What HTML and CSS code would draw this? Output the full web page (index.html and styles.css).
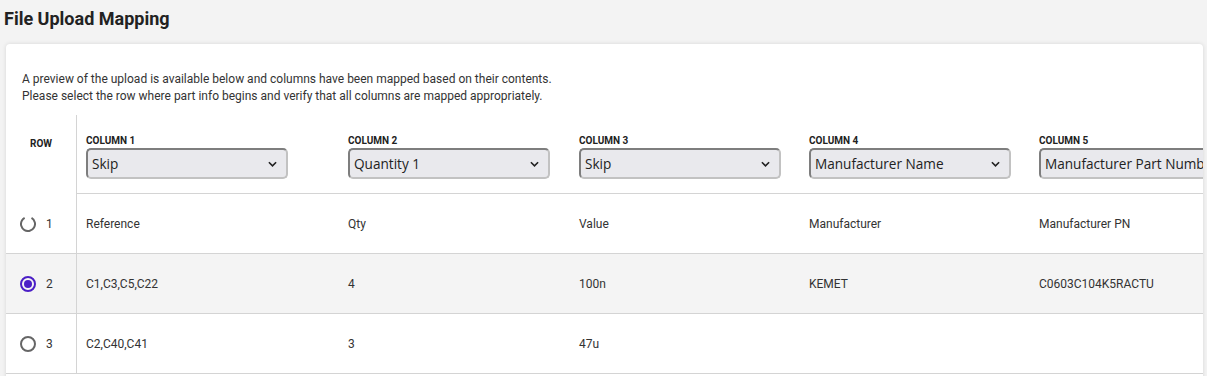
FILE: index.html
```html
<!DOCTYPE html>
<html lang="en">

<head>
  <meta charset="UTF-8">
  <meta name="viewport" content="width=device-width, initial-scale=1.0">
  <title>File Upload Mapping</title>
  <link rel="stylesheet" href="styles.css">
</head>

<body>
  <div class="page">
    <h1 class="page-title">File Upload Mapping</h1>

    <div class="card">
      <p class="intro">
        A preview of the upload is available below and columns have been mapped based on their contents.<br>
        Please select the row where part info begins and verify that all columns are mapped appropriately.
      </p>

      <table class="mapping">
        <colgroup>
          <col class="col-row">
          <col class="col-1">
          <col class="col-2">
          <col class="col-3">
          <col class="col-4">
          <col class="col-5">
        </colgroup>
        <thead>
          <tr>
            <th class="row-head">Row</th>
            <th>
              <label class="col-label">Column 1</label>
              <div class="select-wrap">
                <select>
                  <option>Skip</option>
                </select>
                <svg class="chevron" viewBox="0 0 10 6"><path d="M1 1l4 4 4-4"/></svg>
              </div>
            </th>
            <th>
              <label class="col-label">Column 2</label>
              <div class="select-wrap">
                <select>
                  <option>Quantity 1</option>
                </select>
                <svg class="chevron" viewBox="0 0 10 6"><path d="M1 1l4 4 4-4"/></svg>
              </div>
            </th>
            <th>
              <label class="col-label">Column 3</label>
              <div class="select-wrap">
                <select>
                  <option>Skip</option>
                </select>
                <svg class="chevron" viewBox="0 0 10 6"><path d="M1 1l4 4 4-4"/></svg>
              </div>
            </th>
            <th>
              <label class="col-label">Column 4</label>
              <div class="select-wrap">
                <select>
                  <option>Manufacturer Name</option>
                </select>
                <svg class="chevron" viewBox="0 0 10 6"><path d="M1 1l4 4 4-4"/></svg>
              </div>
            </th>
            <th>
              <label class="col-label">Column 5</label>
              <div class="select-wrap">
                <select>
                  <option>Manufacturer Part Number</option>
                </select>
                <svg class="chevron" viewBox="0 0 10 6"><path d="M1 1l4 4 4-4"/></svg>
              </div>
            </th>
          </tr>
        </thead>
        <tbody>
          <tr>
            <td class="row-cell">
              <span class="radio">
                <svg viewBox="0 0 16 16"><circle cx="8" cy="8" r="7" stroke-dasharray="36.6 7.4" transform="rotate(300 8 8)"/></svg>
              </span>
              <span class="row-num">1</span>
            </td>
            <td>Reference</td>
            <td>Qty</td>
            <td>Value</td>
            <td>Manufacturer</td>
            <td>Manufacturer PN</td>
          </tr>
          <tr class="selected">
            <td class="row-cell">
              <span class="radio checked">
                <svg viewBox="0 0 16 16"><circle cx="8" cy="8" r="7"/><circle class="dot" cx="8" cy="8" r="4"/></svg>
              </span>
              <span class="row-num">2</span>
            </td>
            <td>C1,C3,C5,C22</td>
            <td>4</td>
            <td>100n</td>
            <td>KEMET</td>
            <td>C0603C104K5RACTU</td>
          </tr>
          <tr>
            <td class="row-cell">
              <span class="radio">
                <svg viewBox="0 0 16 16"><circle cx="8" cy="8" r="7"/></svg>
              </span>
              <span class="row-num">3</span>
            </td>
            <td>C2,C40,C41</td>
            <td>3</td>
            <td>47u</td>
            <td></td>
            <td></td>
          </tr>
        </tbody>
      </table>
    </div>
  </div>
</body>

</html>
```

FILE: styles.css
```css
body {
  margin: 0;
  padding: 0;
  background-color: #f3f3f3;
  font-family: Roboto, "Liberation Sans", sans-serif;
  color: #333;
}

.page {
  padding: 0 4px 0 6px;
}

.page-title {
  margin: 0 0 13px -2px;
  padding-top: 7px;
  font-size: 18px;
  line-height: 24px;
  font-weight: bold;
  color: #222;
}

.card {
  background-color: #ffffff;
  border-radius: 4px;
  box-shadow: 0 0 4px rgba(0, 0, 0, 0.12);
  overflow: hidden;
  height: 360px;
}

.intro {
  margin: 0;
  padding: 27px 16px 0;
  font-size: 12px;
  line-height: 17px;
  color: #333;
}

.mapping {
  margin-top: 10px;
  border-collapse: separate;
  border-spacing: 0;
  table-layout: fixed;
  width: 1264px;
  font-size: 12px;
  color: #333;
}

.col-row { width: 71px; }
.col-1 { width: 262px; }
.col-2 { width: 231px; }
.col-3 { width: 230px; }
.col-4 { width: 230px; }
.col-5 { width: 240px; }

.mapping th {
  text-align: left;
  padding: 20px 0 14px 9px;
  border-bottom: 1px solid #d4d4d4;
  vertical-align: top;
}

.mapping th.row-head {
  padding: 23px 0 0;
  text-align: center;
  border-bottom: none;
  border-right: 1px solid #d4d4d4;
  font-size: 10px;
  line-height: 12px;
  text-transform: uppercase;
  color: #222;
}

.col-label {
  display: block;
  margin-bottom: 1px;
  font-size: 10px;
  line-height: 12px;
  font-weight: bold;
  text-transform: uppercase;
  color: #222;
}

.select-wrap {
  position: relative;
  width: 202px;
}

.select-wrap select {
  appearance: none;
  -webkit-appearance: none;
  width: 202px;
  height: 31px;
  padding: 0 24px 0 4px;
  background-color: #e9e9ed;
  border: 2px solid #c2c2c2;
  border-top-color: #7e7e7e;
  border-left-color: #7e7e7e;
  border-radius: 5px;
  font-family: "Open Sans", sans-serif;
  font-size: 13.6px;
  color: #222;
}

.chevron {
  position: absolute;
  right: 11px;
  top: 13px;
  width: 9px;
  height: 6px;
  fill: none;
  stroke: #222;
  stroke-width: 1.8;
}

.mapping td {
  height: 59px;
  padding: 0 0 0 9px;
  border-bottom: 1px solid #d4d4d4;
  vertical-align: middle;
  white-space: nowrap;
}

.mapping td.row-cell {
  padding: 0 0 0 14px;
  border-right: 1px solid #d4d4d4;
}

.mapping tr.selected td {
  background-color: #f4f4f4;
}

.radio {
  display: inline-block;
  width: 16px;
  height: 16px;
  vertical-align: middle;
}

.radio svg {
  display: block;
  width: 16px;
  height: 16px;
  fill: none;
  stroke: #666;
  stroke-width: 2;
}

.radio.checked svg {
  stroke: #4b1fc6;
}

.radio.checked .dot {
  fill: #4b1fc6;
  stroke: none;
}

.row-num {
  display: inline-block;
  margin-left: 7px;
  vertical-align: middle;
  font-size: 12px;
}
```
